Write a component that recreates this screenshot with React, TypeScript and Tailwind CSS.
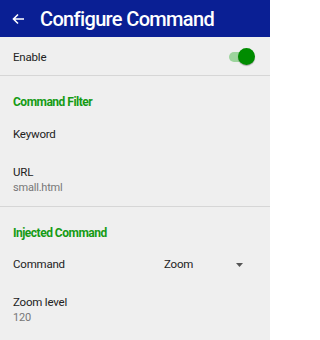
export default function App() {
  return (
    <div className="w-[270px] h-[340px] overflow-hidden bg-[#efefef] font-['Roboto',sans-serif] text-[#222]">
      <div className="h-[37px] bg-[#0a1f94] flex items-center text-white">
        <svg width="12" height="12" viewBox="0 0 12 12" className="ml-[12px] mt-[1px]" fill="none" stroke="white" strokeWidth="1.6">
          <path d="M12 6H1.5M6 1.5L1.5 6 6 10.5" />
        </svg>
        <span className="ml-[16px] text-[20px] font-medium tracking-[-0.65px]">Configure Command</span>
      </div>

      <div className="h-[39px] flex items-center justify-between px-[13px] pt-[4px] border-b border-[#d6d6d6]">
        <span className="text-[11.5px] tracking-[-0.2px]">Enable</span>
        <div className="relative w-[26px] h-[18px] flex items-center mr-[2px] mt-[-3px]">
          <div className="w-[22px] h-[10px] rounded-full bg-[#9dd49d]" />
          <div className="absolute right-0 w-[17px] h-[17px] rounded-full bg-[#008c00] shadow-[0_1px_1px_rgba(0,0,0,0.3)]" />
        </div>
      </div>

      <div className="h-[48px] flex items-center px-[13px] pt-[4px]">
        <span className="text-[12px] font-bold tracking-[-0.5px] text-[#159b15]">Command Filter</span>
      </div>
      <div className="h-[18px] flex items-center px-[13px] pt-[3px]">
        <span className="text-[11.5px] tracking-[-0.2px]">Keyword</span>
      </div>
      <div className="px-[13px] pt-[23px] pb-[11px] border-b border-[#d6d6d6] leading-[15px] tracking-[-0.2px]">
        <div className="text-[11.5px]">URL</div>
        <div className="text-[11px] text-[#777]">small.html</div>
      </div>

      <div className="h-[48px] flex items-center px-[13px] pt-[4px]">
        <span className="text-[12px] font-bold tracking-[-0.5px] text-[#159b15]">Injected Command</span>
      </div>
      <div className="h-[16px] flex items-center px-[13px] pt-[3px] tracking-[-0.2px]">
        <span className="text-[11.5px] w-[151px]">Command</span>
        <span className="text-[11.5px] w-[72px]">Zoom</span>
        <svg width="7" height="4" viewBox="0 0 7 4">
          <path d="M0 0h7L3.5 4z" fill="#555" />
        </svg>
      </div>
      <div className="px-[13px] pt-[24px] leading-[15px] tracking-[-0.2px]">
        <div className="text-[11.5px]">Zoom level</div>
        <div className="text-[11px] text-[#777]">120</div>
      </div>
    </div>
  )
}
